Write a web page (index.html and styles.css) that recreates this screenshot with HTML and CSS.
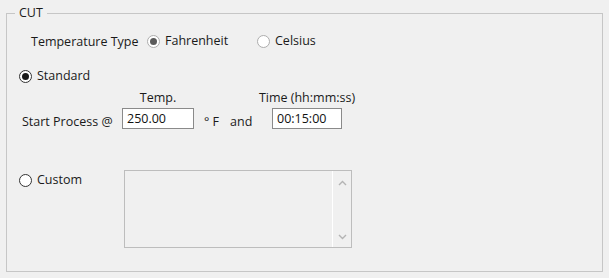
FILE: index.html
```html
<!DOCTYPE html>
<html>
<head>
<meta charset="utf-8">
<link rel="stylesheet" href="styles.css">
</head>
<body>
<div class="group">
  <span class="legend">CUT</span>
  <div class="row-type">
    <span class="type-label">Temperature Type</span>
    <label class="opt opt-f"><span class="radio radio-dim checked"></span><span>Fahrenheit</span></label>
    <label class="opt"><span class="radio radio-dim"></span><span>Celsius</span></label>
  </div>
  <div class="row-std">
    <label class="opt"><span class="radio checked"></span><span>Standard</span></label>
  </div>
  <div class="row-heads">
    <span class="col-label"></span>
    <span class="col-temp"><span>Temp.</span></span>
    <span class="col-mid"></span>
    <span class="col-time"><span>Time (hh:mm:ss)</span></span>
  </div>
  <div class="row-inputs">
    <span class="col-label start">Start Process @</span>
    <span class="col-temp"><span class="field">250.00</span></span>
    <span class="col-mid"><span class="deg">° F</span><span class="and">and</span></span>
    <span class="col-time"><span class="field">00:15:00</span></span>
  </div>
  <div class="row-custom">
    <label class="opt opt-c"><span class="radio"></span><span>Custom</span></label>
    <div class="memo">
      <div class="memo-body"></div>
      <div class="scroll">
        <svg class="arrow" width="9" height="6" viewBox="0 0 9 6"><path d="M1 5 L4.5 1.5 L8 5" fill="none" stroke="#b4b4b4" stroke-width="1.4"/></svg>
        <svg class="arrow" width="9" height="6" viewBox="0 0 9 6"><path d="M1 1 L4.5 4.5 L8 1" fill="none" stroke="#b4b4b4" stroke-width="1.4"/></svg>
      </div>
    </div>
  </div>
</div>
</body>
</html>
```

FILE: styles.css
```css
html, body {
  margin: 0;
  padding: 0;
  background: #f0f0f0;
}
body {
  font-family: "Open Sans", "Noto Sans", sans-serif;
  font-size: 12.5px;
  color: #1a1a1a;
  width: 609px;
  height: 278px;
  overflow: hidden;
  padding-top: 13px;
  padding-left: 6px;
  box-sizing: border-box;
}
.group {
  position: relative;
  box-sizing: border-box;
  width: 597px;
  height: 259px;
  border: 1px solid #c6c6c6;
}
.legend {
  position: absolute;
  top: -9px;
  left: 8px;
  padding: 0 4px;
  background: #f0f0f0;
  line-height: 16px;
}
.opt {
  display: flex;
  align-items: center;
  gap: 5px;
  line-height: 16px;
}
.radio {
  box-sizing: border-box;
  width: 13px;
  height: 13px;
  border-radius: 50%;
  border: 1px solid #333;
  background: #fff;
  display: flex;
  align-items: center;
  justify-content: center;
  flex: none;
}
.radio.checked::after {
  content: "";
  width: 7px;
  height: 7px;
  border-radius: 50%;
  background: #1a1a1a;
}
.radio-dim {
  border-color: #adadad;
}
.radio-dim.checked::after {
  background: #5a5a5a;
}
.row-type {
  display: flex;
  align-items: center;
  margin-top: 19px;
  padding-left: 24px;
  height: 16px;
}
.type-label {
  width: 116px;
}
.opt-f {
  width: 110px;
}
.row-std {
  margin-top: 19px;
  padding-left: 12px;
  height: 16px;
  display: flex;
}
.row-heads, .row-inputs {
  display: flex;
}
.row-heads {
  margin-top: 6px;
  height: 16px;
  line-height: 16px;
}
.col-label {
  width: 115px;
}
.col-temp {
  width: 72px;
  display: flex;
  justify-content: center;
  white-space: nowrap;
}
.col-mid {
  width: 78px;
  display: flex;
  align-items: baseline;
  white-space: nowrap;
}
.col-time {
  width: 70px;
  display: flex;
  justify-content: center;
  white-space: nowrap;
}
.row-inputs {
  margin-top: 2px;
  align-items: baseline;
  height: 21px;
}
.start {
  padding-left: 15px;
  box-sizing: border-box;
  position: relative;
  top: 3px;
}
.col-mid {
  position: relative;
  top: 3px;
}
.field {
  box-sizing: border-box;
  width: 100%;
  height: 21px;
  line-height: 19px;
  border: 1px solid #8a8a8a;
  background: #fff;
  padding-left: 4px;
  color: #111;
}
.deg {
  margin-left: 10px;
}
.and {
  margin-left: 11px;
}
.row-custom {
  display: flex;
  align-items: flex-start;
  margin-top: 41px;
  padding-left: 12px;
}
.opt-c {
  margin-top: 2px;
  width: 105px;
}
.memo {
  box-sizing: border-box;
  width: 228px;
  height: 78px;
  border: 1px solid #bdbdbd;
  background: #f0f0f0;
  display: flex;
}
.memo-body {
  flex: 1;
}
.scroll {
  box-sizing: border-box;
  width: 19px;
  border-left: 1px solid #ffffff;
  display: flex;
  flex-direction: column;
  justify-content: space-between;
  align-items: center;
  padding: 9px 0 7px;
}
.arrow {
  display: block;
}
```
